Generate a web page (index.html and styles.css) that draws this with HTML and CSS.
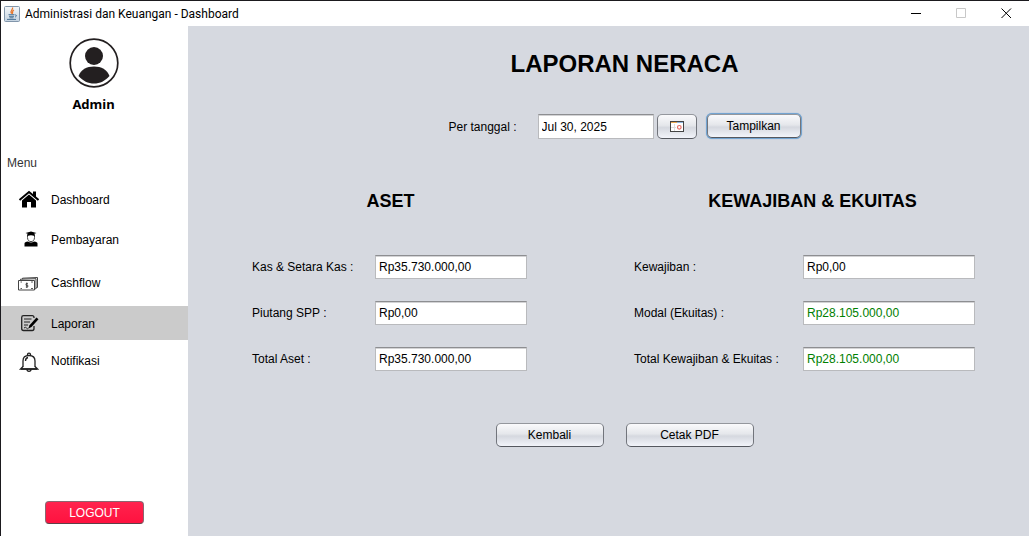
FILE: index.html
```html
<!DOCTYPE html>
<html lang="id">
<head>
<meta charset="utf-8">
<title>Administrasi dan Keuangan - Dashboard</title>
<link rel="stylesheet" href="styles.css">
</head>
<body>
<div class="window">
  <header class="titlebar">
    <svg class="app-icon" viewBox="0 0 16 16" aria-hidden="true">
      <defs><linearGradient id="cup" x1="0" y1="0" x2="0" y2="1"><stop offset="0" stop-color="#f4f7fa"/><stop offset="1" stop-color="#c3d2e0"/></linearGradient></defs>
      <rect x=".5" y=".5" width="15" height="15" rx="1" fill="url(#cup)" stroke="#8296ab"/>
      <path d="M8.500 1.500C9.500 3.500 5.500 4.500 7.500 7.500M10 4C7.500 5 9.500 6 8 8" fill="none" stroke="#e8762b" stroke-width="1.300"/>
      <path d="M4.500 8.700H10.500M5 10.300H10M5.500 11.800H9.500M3 13.400H12M11 9C13 8.500 13 10.500 11 11" fill="none" stroke="#4a7396"/>
    </svg>
    <span class="window-title">Administrasi dan Keuangan - Dashboard</span>
    <div class="window-controls">
      <button class="window-button" type="button" aria-label="Minimize"><svg viewBox="0 0 11 11"><path d="M0 5.500H10"/></svg></button>
      <button class="window-button" type="button" aria-label="Maximize" disabled><svg viewBox="0 0 11 11"><path d="M.5.5H9.500V9.500H.5Z"/></svg></button>
      <button class="window-button" type="button" aria-label="Close"><svg viewBox="0 0 11 11"><path d="M.5.5L10 10M10 .5L.5 10"/></svg></button>
    </div>
  </header>

  <div class="content">
    <aside class="sidebar">
      <div class="profile">
        <svg class="avatar" viewBox="0 0 50 50" aria-hidden="true">
          <circle cx="25" cy="25" r="23.800" fill="#fff" stroke="#231f20" stroke-width="1.700"/>
          <circle cx="25" cy="18" r="9" fill="#231f20"/>
          <path d="M9.500 38C12 31.500 17.500 28.500 25 28.500S38 31.500 40.500 38C36 43 31 45.500 25 45.500S14 43 9.500 38Z" fill="#231f20"/>
        </svg>
        <span class="profile-name">Admin</span>
      </div>
      <p class="menu-title">Menu</p>
      <nav class="menu">
        <a class="menu-item" href="#">
          <svg viewBox="0 0 22 22" aria-hidden="true"><path d="M5 11.500L12 5.500L19 11.500V18.500H14V13H10V18.500H5Z"/><path d="M2.500 11L12 3L21.500 11" fill="none" stroke="#000" stroke-width="2"/><path d="M16 2.500H19V9L16 6.500Z"/></svg>
          Dashboard
        </a>
        <a class="menu-item" href="#">
          <svg viewBox="0 0 22 22" aria-hidden="true"><path d="M8.500 4L14 2.500L19.500 4L14 6Z"/><path d="M10.500 5.500V8.500C10.500 14 17.500 14 17.500 8.500V5.500" fill="#fff" stroke="#444" stroke-width="1"/><path d="M10.500 5H17.500V7Q14 5.500 10.500 7Z"/><path d="M7.500 17.500V14.500Q7.500 13 11 12.500Q14 14.500 17 12.500Q20.500 13 20.500 14.500V17.500Z"/></svg>
          Pembayaran
        </a>
        <a class="menu-item menu-item-tall" href="#">
          <svg viewBox="0 0 22 22" aria-hidden="true"><g fill="#fff" stroke="#444"><path d="M5.500 8V6.200L20.500 5.500V15.500L19 16"/><path d="M3.500 8.500V7.200L19 6.700V16.500L17 17.500"/><path d="M1.500 8.500H17.500V18H1.500Z"/></g><path d="M3.500 10H5M14 10H16M3.500 16.500H5M14 16.500H16M9.800 10.500V16M11 11.700H9V13.300H10.800V15H8.800" fill="none" stroke="#333" stroke-width=".8"/></svg>
          Cashflow
        </a>
        <a class="menu-item menu-item-active" href="#" aria-current="page">
          <svg viewBox="0 0 22 22" aria-hidden="true"><path d="M17 5V4.500Q17 2.700 15.200 2.700H6.500Q4.700 2.700 4.700 4.500V15.500Q4.700 17.500 6.500 17.500H15.200Q17 17.500 17 15.500V13" fill="none" stroke="#222" stroke-width="1.300"/><path d="M7 6H14.500M7 9H13M7 12H11M7 15Q8.500 13.500 9.500 15T11.500 15" fill="none" stroke="#222"/><path d="M11.500 15.500L12.500 12.300L19.500 4.500L21.500 6.200L14.500 14Z"/></svg>
          Laporan
        </a>
        <a class="menu-item menu-item-last" href="#">
          <svg viewBox="0 0 22 22" aria-hidden="true"><g fill="none" stroke="#222" stroke-width="1.300"><path d="M10.500 5.500V4.500Q10.500 3.200 12 3.200T13.500 4.500V5.500"/><path d="M6 17V11Q6 5.500 12 5.500T18 11V17"/><path d="M6 16.500L3.500 19H20.500L18 16.500M8.500 11Q8.500 8 11 7.500"/><path d="M4 19H20M10 19.500Q10 21.300 12 21.300T14 19.500"/></g></svg>
          Notifikasi
        </a>
      </nav>
      <button class="logout" type="button">LOGOUT</button>
    </aside>

    <main class="report">
      <h1 class="report-title">LAPORAN NERACA</h1>
      <form class="date-row">
        <label class="date-label" for="tanggal">Per tanggal :</label>
        <input class="text-field date-field" id="tanggal" type="text" value="Jul 30, 2025">
        <button class="button calendar-button" type="button" aria-label="Pilih tanggal">
          <svg viewBox="0 0 14 11" aria-hidden="true"><rect x=".5" y=".5" width="13" height="10" fill="#fff" stroke="#444"/><path d="M1 1.500H7" stroke="#e8a850" stroke-width="1"/><path d="M7 1.500H13" stroke="#8eb4dc" stroke-width="1"/><path d="M4.500 3V10M1 6.500H6" stroke="#ddd"/><circle cx="9.300" cy="6.300" r="1.800" fill="none" stroke="#e66a62" stroke-width="1.200"/></svg>
        </button>
        <button class="button show-button" type="button">Tampilkan</button>
      </form>

      <div class="panels">
        <section>
          <h2 class="panel-title">ASET</h2>
          <div class="fields">
            <label for="kas">Kas &amp; Setara Kas :</label>
            <input class="text-field" id="kas" type="text" value="Rp35.730.000,00">
            <label for="piutang">Piutang SPP :</label>
            <input class="text-field" id="piutang" type="text" value="Rp0,00">
            <label for="total-aset">Total Aset :</label>
            <input class="text-field" id="total-aset" type="text" value="Rp35.730.000,00">
          </div>
        </section>
        <section>
          <h2 class="panel-title panel-title-equity">KEWAJIBAN &amp; EKUITAS</h2>
          <div class="fields fields-equity">
            <label for="kewajiban">Kewajiban :</label>
            <input class="text-field" id="kewajiban" type="text" value="Rp0,00">
            <label for="modal">Modal (Ekuitas) :</label>
            <input class="text-field positive" id="modal" type="text" value="Rp28.105.000,00">
            <label for="total-ekuitas">Total Kewajiban &amp; Ekuitas :</label>
            <input class="text-field positive" id="total-ekuitas" type="text" value="Rp28.105.000,00">
          </div>
        </section>
      </div>

      <div class="actions">
        <button class="button back-button" type="button">Kembali</button>
        <button class="button print-button" type="button">Cetak PDF</button>
      </div>
    </main>
  </div>
</div>
</body>
</html>
```
FILE: styles.css
```css
* {
  box-sizing: border-box;
}

body {
  margin: 0;
  font-family: "Liberation Sans", Arial, sans-serif;
  font-size: 12px;
  color: #000;
}

button,
input {
  font: inherit;
  color: inherit;
}

.window {
  display: flex;
  flex-direction: column;
  min-height: 100vh;
  border-top: 1px solid #1b1a1e;
  border-left: 1px solid #1b1a1e;
  background: #fff;
}

/* Title bar */
.titlebar {
  display: flex;
  align-items: center;
  height: 25px;
  padding-left: 3px;
  gap: 5px;
}

.app-icon {
  width: 16px;
  height: 16px;
}

.window-title {
  font-family: Roboto, "Open Sans", sans-serif;
  font-size: 12px;
  line-height: 16px;
}

.window-controls {
  display: flex;
  align-self: stretch;
  margin-left: auto;
}

.window-button {
  display: grid;
  place-items: center;
  width: 45px;
  padding: 0;
  border: 0;
  background: none;
}

.window-button svg {
  width: 11px;
  height: 11px;
  fill: none;
  stroke: #000;
}

.window-button:disabled svg {
  stroke: #c8c8c8;
}

.content {
  display: flex;
  flex: 1;
}

/* Sidebar */
.sidebar {
  display: flex;
  flex-direction: column;
  width: 187px;
  flex-shrink: 0;
  padding: 12px 0;
}

.profile {
  display: flex;
  flex-direction: column;
  align-items: center;
  gap: 8px;
  padding-right: 2px;
}

.avatar {
  width: 50px;
  height: 50px;
}

.profile-name {
  font-family: "Noto Sans", sans-serif;
  font-size: 13px;
  font-weight: 700;
  line-height: 16px;
}

.menu-title {
  margin: 43px 0 9px 6px;
  line-height: 16px;
  color: #333;
}

.menu-item {
  display: flex;
  align-items: center;
  gap: 12px;
  height: 40px;
  padding-left: 16px;
  color: inherit;
  text-decoration: none;
}

.menu-item svg {
  width: 22px;
  height: 22px;
}

.menu-item-tall {
  height: 46px;
}

.menu-item-active {
  height: 34px;
  padding-top: 2px;
  background: #cbcbcb;
}

.menu-item-last {
  height: 42px;
}

.logout {
  width: 99px;
  height: 23px;
  margin: auto auto 0;
  padding: 0;
  border: 1px solid #8b6670;
  border-bottom-color: #604048;
  border-radius: 4px;
  background: linear-gradient(#ff234e, #ff123f);
  color: #fff;
}

/* Report */
.report {
  flex: 1;
  padding: 24px 0 24px 32px;
  background: #d6d9e0;
}

.report-title {
  margin: 0;
  font-size: 24px;
  line-height: 28px;
  text-align: center;
}

.date-row {
  display: flex;
  justify-content: center;
  margin-top: 36px;
}

.date-label {
  width: 89px;
  line-height: 26px;
}

.text-field {
  width: 100%;
  min-width: 0;
  height: 24px;
  padding: 0 3px;
  border: 1px solid #b9babd;
  border-top-color: #8d8e91;
  border-radius: 0;
  background: #fff;
  box-shadow: inset 0 1px #d3d3d5;
}

.text-field.positive {
  color: #008000;
}

.date-field {
  width: 116px;
  height: 25px;
}

.button {
  height: 24px;
  padding: 0;
  border: 1px solid #72757c;
  border-top-color: #94979d;
  border-bottom-color: #55585f;
  border-radius: 5px;
  background: linear-gradient(#fafafc, #e5e7eb 45%, #d5d8df 55%, #f2f4fa);
}

.calendar-button {
  display: grid;
  place-items: center;
  width: 40px;
  height: 25px;
  margin: 0 10px 0 3px;
}

.calendar-button svg {
  width: 14px;
  height: 11px;
}

.show-button {
  width: 94px;
  box-shadow: 0 0 0 1px #73a4d1, 0 0 1px 1px #73a4d1;
}

.panels {
  display: grid;
  grid-template-columns: 275fr 341fr;
  gap: 107px;
  margin-top: 50px;
  padding: 0 54px 0 32px;
}

.panel-title {
  margin: 0 0 43px;
  padding-left: 2px;
  font-size: 18px;
  line-height: 22px;
  text-align: center;
}

.panel-title-equity {
  padding-left: 16px;
}

.fields {
  display: grid;
  grid-template-columns: 123px 1fr;
  align-items: center;
  row-gap: 22px;
}

.fields-equity {
  grid-template-columns: 169px 1fr;
}

.actions {
  display: flex;
  justify-content: center;
  gap: 22px;
  margin-top: 52px;
}

.back-button {
  width: 108px;
}

.print-button {
  width: 128px;
}
```
